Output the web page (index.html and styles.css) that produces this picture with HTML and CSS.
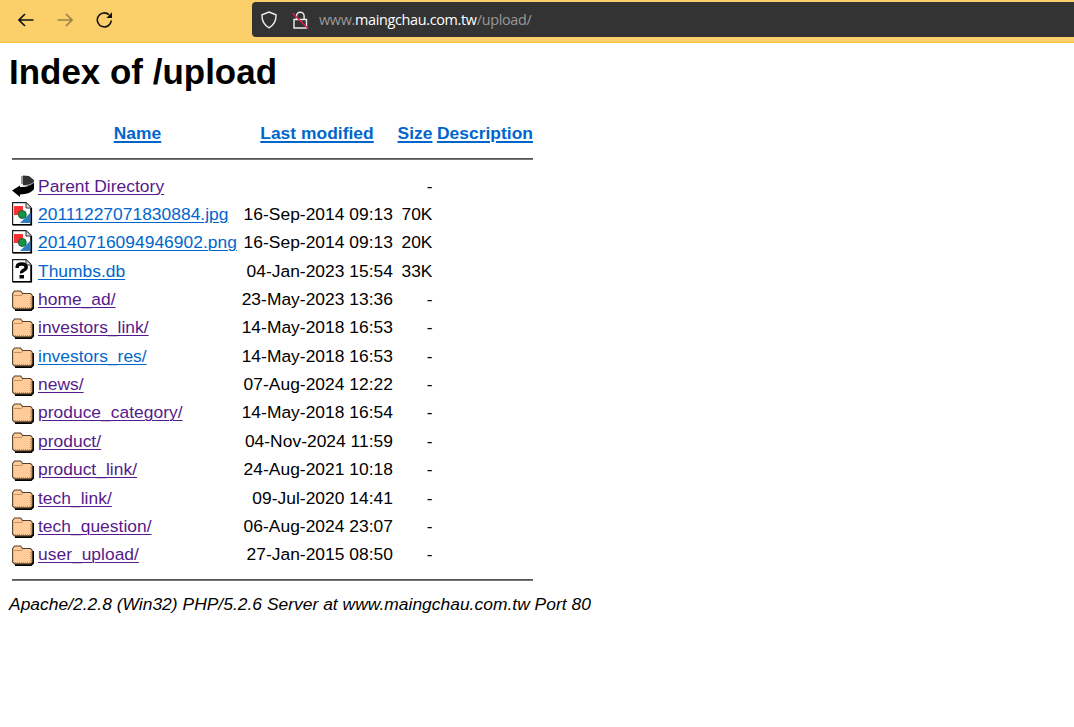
FILE: index.html
```html
<!DOCTYPE html>
<html lang="en">
<head>
    <meta charset="UTF-8">
    <title>Index of /upload</title>
    <link rel="stylesheet" href="styles.css">
</head>
<body>
    <!-- Icon shapes -->
    <svg class="sprite" width="0" height="0">
        <symbol id="back" viewBox="0 0 22 24">
            <path d="M9 2h3v8H9z" fill="#999"/>
            <path d="M11 1.500l6 .5 5 4v5l-5 1-6-1z" fill="#333"/>
            <path d="M22 9v6q-3 5-14 5.500V23L0 16.500 8 11.500v1.500q9 .5 14-4z" fill="#000"/>
            <path d="M10 11.500q8 .5 12-3.500" fill="none" stroke="#ccc" stroke-width=".8"/>
        </symbol>
        <symbol id="image" viewBox="0 0 22 24">
            <path d="M.6.6H14l5 5v17H.6z" fill="#fff" stroke="#222" stroke-width="1.2"/>
            <path d="M1 22.800h18.300V6" fill="none" stroke="#000" stroke-width="1.6"/>
            <path d="M14 1v5h5" fill="#ddd" stroke="#333"/>
            <path d="M2 4h9v9H2z" fill="#ff3030"/>
            <path d="M18.500 10.500V21H8z" fill="#2e7fc2"/>
            <circle cx="10.300" cy="12.500" r="4" fill="#159447" stroke="#174c2a" stroke-width=".8"/>
        </symbol>
        <symbol id="unknown" viewBox="0 0 22 24">
            <path d="M.6.6H14l5 5v17H.6z" fill="#fff" stroke="#222" stroke-width="1.2"/>
            <path d="M1 22.800h18.300V6" fill="none" stroke="#000" stroke-width="1.6"/>
            <path d="M14 1v5h5" fill="#ddd" stroke="#333"/>
            <path d="M5.200 9V7.500q.3-2.500 4.500-2.500t4.500 3q0 2-2.500 3.200t-2 3" fill="none" stroke="#000" stroke-width="3.4"/>
            <path d="M7.500 16h4.500v3.500H7.500z" fill="#000"/>
        </symbol>
        <symbol id="folder" viewBox="0 0 22 24">
            <path d="M3 23h16l2-2V9" fill="none" stroke="#000" stroke-width="2"/>
            <path d="M.6 6.500l2-2.500h6l2 2.500H18.500l1.700 1.700V20L18.500 21.900H2.500L.6 20z" fill="#ffcc99" stroke="#54402d" stroke-width="1.1"/>
            <path d="M2 8.500h7l2-1" fill="none" stroke="#c98f61"/>
            <path d="M3 20.500h15M18.500 10v9" fill="none" stroke="#c98f61" stroke-dasharray="1 1"/>
        </symbol>
    </svg>

    <div class="toolbar">
        <svg class="nav" viewBox="0 0 16 16"><path d="M15.500 8H1M7 2L1 8l6 6"/></svg>
        <svg class="nav disabled" viewBox="0 0 16 16"><path d="M.5 8H15M9 2l6 6-6 6"/></svg>
        <svg class="nav" viewBox="0 0 16 16"><path d="M15.300 8.500A7 7 0 1 1 13 2.700"/><path d="M16 .3v5.700h-5.700z" class="tip"/></svg>
        <div class="address">
            <svg class="shield" viewBox="0 0 16 18"><path d="M8 1l7 2.800c.3 6-1.500 10-7 13C2.500 13.800.7 9.800 1 3.800z"/></svg>
            <svg class="lock" viewBox="0 0 17 18"><path d="M2 8.500h12.500v8.500H2zM4.500 8.500V5a3.800 3.800 0 0 1 7.600 0v3.500"/><path d="M.5 2l15.500 15.500" class="slash"/></svg>
            <span class="url">www.<b>maingchau.com.tw</b>/upload/</span>
        </div>
    </div>

    <div class="page">
        <h1>Index of /upload</h1>
        <div class="listing">
            <div class="row head">
                <span></span>
                <span><a href="#">Name</a></span>
                <span><a href="#">Last modified</a></span>
                <span><a href="#">Size</a></span>
                <span><a href="#">Description</a></span>
            </div>
            <hr>
            <div class="files">
                <div class="row"><svg><use href="#back"/></svg><a class="visited" href="#">Parent Directory</a><span></span><span>-</span></div>
                <div class="row"><svg><use href="#image"/></svg><a href="#">20111227071830884.jpg</a><span>16-Sep-2014 09:13</span><span>70K</span></div>
                <div class="row"><svg><use href="#image"/></svg><a href="#">20140716094946902.png</a><span>16-Sep-2014 09:13</span><span>20K</span></div>
                <div class="row"><svg><use href="#unknown"/></svg><a href="#">Thumbs.db</a><span>04-Jan-2023 15:54</span><span>33K</span></div>
                <div class="row"><svg><use href="#folder"/></svg><a class="visited" href="#">home_ad/</a><span>23-May-2023 13:36</span><span>-</span></div>
                <div class="row"><svg><use href="#folder"/></svg><a class="visited" href="#">investors_link/</a><span>14-May-2018 16:53</span><span>-</span></div>
                <div class="row"><svg><use href="#folder"/></svg><a href="#">investors_res/</a><span>14-May-2018 16:53</span><span>-</span></div>
                <div class="row"><svg><use href="#folder"/></svg><a class="visited" href="#">news/</a><span>07-Aug-2024 12:22</span><span>-</span></div>
                <div class="row"><svg><use href="#folder"/></svg><a class="visited" href="#">produce_category/</a><span>14-May-2018 16:54</span><span>-</span></div>
                <div class="row"><svg><use href="#folder"/></svg><a class="visited" href="#">product/</a><span>04-Nov-2024 11:59</span><span>-</span></div>
                <div class="row"><svg><use href="#folder"/></svg><a class="visited" href="#">product_link/</a><span>24-Aug-2021 10:18</span><span>-</span></div>
                <div class="row"><svg><use href="#folder"/></svg><a class="visited" href="#">tech_link/</a><span>09-Jul-2020 14:41</span><span>-</span></div>
                <div class="row"><svg><use href="#folder"/></svg><a class="visited" href="#">tech_question/</a><span>06-Aug-2024 23:07</span><span>-</span></div>
                <div class="row"><svg><use href="#folder"/></svg><a class="visited" href="#">user_upload/</a><span>27-Jan-2015 08:50</span><span>-</span></div>
            </div>
            <hr>
        </div>
        <address>Apache/2.2.8 (Win32) PHP/5.2.6 Server at www.maingchau.com.tw Port 80</address>
    </div>
</body>
</html>
```
FILE: styles.css
```css
* {
    box-sizing: border-box;
}

body {
    margin: 0;
    background-color: #fff;
    color: #000;
    font-family: "Liberation Sans", Arial, sans-serif;
    font-size: 17.4px;
    letter-spacing: 0.03px;
}

.sprite {
    display: block;
}

.toolbar {
    height: 43px;
    display: flex;
    align-items: flex-start;
    padding: 2px 0 0 18px;
    background-color: #fbd06a;
    border-bottom: 1px solid #f9bf3b;
}

.nav {
    width: 16px;
    height: 16px;
    margin: 10px 23px 0 0;
    fill: none;
    stroke: #111;
    stroke-width: 1.6;
}

.nav .tip {
    fill: #111;
    stroke: none;
}

.disabled {
    opacity: 0.4;
}

.address {
    flex: 1;
    height: 35px;
    margin-left: 117px;
    padding-left: 9px;
    display: flex;
    align-items: center;
    background-color: #333;
    border-radius: 4px 0 0 4px;
}

.address svg {
    fill: none;
    stroke: #eee;
    stroke-width: 1.4;
}

.shield {
    width: 16px;
    height: 18px;
}

.lock {
    width: 17px;
    height: 18px;
    margin: 0 10px 0 15px;
}

.lock .slash {
    stroke: #e3174b;
}

.url {
    padding-bottom: 1px;
    font-family: "Open Sans", "Noto Sans", sans-serif;
    font-size: 14.4px;
    letter-spacing: -0.32px;
    color: #999;
}

.url b {
    font-weight: normal;
    color: #fff;
}

.page {
    padding: 8px 9px;
}

h1 {
    height: 42px;
    margin: 0 0 22px;
    font-size: 34.9px;
    line-height: 42px;
}

.listing {
    width: 521px;
    margin-left: 3px;
}

.row {
    display: grid;
    grid-template-columns: 22px 199px 152px 36px 96px;
    column-gap: 4px;
    height: 28.36px;
    line-height: 28px;
    white-space: nowrap;
}

.row span {
    text-align: right;
}

.files .row span:last-child {
    padding-right: 0.5px;
}

.row svg {
    width: 22px;
    height: 24px;
    margin-top: 2px;
}

.row a {
    justify-self: start;
}

.head {
    height: 36px;
    line-height: 36px;
    font-weight: bold;
}

.row.head span {
    text-align: center;
}

a {
    color: #0066cc;
    text-underline-offset: 2px;
    text-decoration-thickness: 1px;
}

.head a {
    text-decoration-thickness: 2px;
}

.visited {
    color: #551a8b;
}

hr {
    height: 2px;
    margin: 7px 0 0;
    border: 0;
    background-color: #777;
    border-top: 1px solid #555;
}

.files {
    padding-top: 11.58px;
    height: 412px;
}

address {
    margin-top: 13px;
    line-height: 20px;
}
```
